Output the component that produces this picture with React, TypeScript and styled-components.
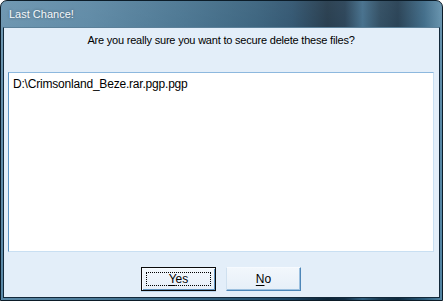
import React from "react";
import styled, { createGlobalStyle } from "styled-components";

const Global = createGlobalStyle`
  html, body { margin: 0; padding: 0; background: #ffffff; }
  #root { width: 443px; height: 301px; }
`;

const Window = styled.div`
  box-sizing: border-box;
  width: 443px;
  height: 301px;
  display: flex;
  flex-direction: column;
  border: 1px solid #0c1c28;
  border-radius: 7px 7px 0 0;
  padding: 0 2px 2px 2px;
  background:
    linear-gradient(180deg, rgba(255,255,255,0.14) 0%, rgba(255,255,255,0.03) 45%, rgba(0,0,0,0) 100%),
    linear-gradient(90deg, #5a88a6 0%, #4c7c9b 20%, #356584 42%, #24516f 58%, #1a4260 66%, #0d2538 74%, #112d44 78%, #2f5e7e 82%, #18384f 86%, #0e2a40 90%, #2a5b7b 96%, #5486a4 100%);
  overflow: hidden;
`;

const TitleBar = styled.div`
  height: 26px;
  display: flex;
  align-items: center;
  padding-left: 6px;
  font-family: "Liberation Sans", Arial, sans-serif;
  font-size: 11px;
  color: #f4f8fb;
  text-shadow: 0 0 3px rgba(0, 0, 0, 0.4);
`;

const Client = styled.div`
  flex: 1;
  display: flex;
  flex-direction: column;
  background: #e3eef9;
  border: 1px solid #12283a;
  border-top-color: #5b8099;
  padding: 0 5px 5px 4px;
  font-family: "Liberation Sans", Arial, sans-serif;
  color: #000;
`;

const Message = styled.div`
  text-align: center;
  font-size: 11px;
  letter-spacing: -0.2px;
  line-height: 13px;
  padding-top: 6px;
  height: 38px;
`;

const ListBox = styled.div`
  box-sizing: border-box;
  height: 180px;
  background: #ffffff;
  border: 1px solid #c9dff2;
  border-left-color: #5a93c4;
  border-top-color: #8db8de;
  padding: 4px 4px;
  font-size: 12px;
  letter-spacing: -0.2px;
  line-height: 14px;
`;

const ButtonRow = styled.div`
  display: flex;
  justify-content: center;
  gap: 10px;
  margin-top: 15px;
`;

const Button = styled.button<{ $default?: boolean }>`
  box-sizing: border-box;
  width: 75px;
  height: 24px;
  padding: 0;
  position: relative;
  font-family: "Liberation Sans", Arial, sans-serif;
  font-size: 12px;
  color: #000;
  background: linear-gradient(180deg, #f2f7fc 0%, #e6eff8 100%);
  border: 1px solid;
  border-color: ${(p) => (p.$default ? "#0a0a0a" : "#f6faff #4d86b8 #4d86b8 #cfe0ef")};
  box-shadow: ${(p) =>
    p.$default
      ? "inset 1px 1px 0 #f7fbff, inset -1px -1px 0 #5e93c0, 0 1px 0 #b9d4ec"
      : "inset -1px -1px 0 #9cc0df"};
  outline: none;
  cursor: default;
`;

const Focus = styled.span`
  position: absolute;
  left: 4px;
  top: 4px;
  right: 4px;
  bottom: 4px;
  border: 1px dotted #000;
`;

const Key = styled.span`
  text-decoration: underline;
  text-underline-offset: 2px;
`;

export default function App() {
  return (
    <>
      <Global />
      <Window>
        <TitleBar>Last Chance!</TitleBar>
        <Client>
          <Message>Are you really sure you want to secure delete these files?</Message>
          <ListBox>D:\Crimsonland_Beze.rar.pgp.pgp</ListBox>
          <ButtonRow>
            <Button $default>
              <Focus />
              <Key>Y</Key>es
            </Button>
            <Button>
              <Key>N</Key>o
            </Button>
          </ButtonRow>
        </Client>
      </Window>
    </>
  );
}
